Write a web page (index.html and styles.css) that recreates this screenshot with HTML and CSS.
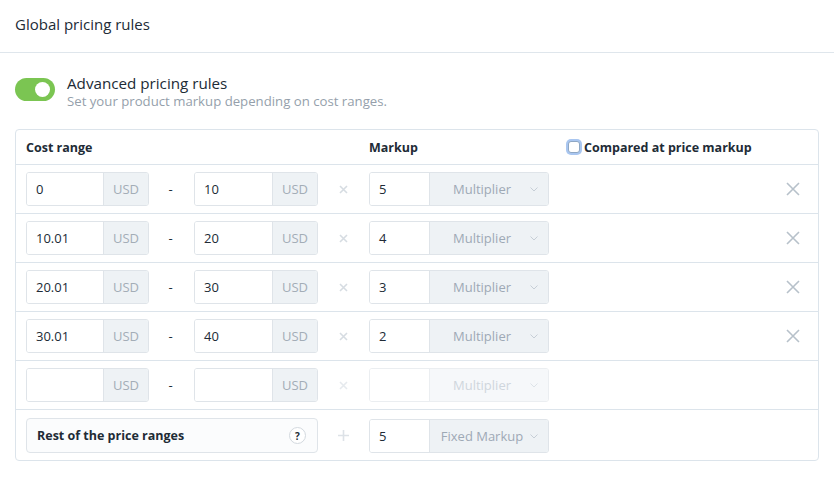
FILE: index.html
```html
<!DOCTYPE html>
<html>
<head>
<meta charset="utf-8">
<link rel="stylesheet" href="styles.css">
</head>
<body>
<div class="page">
  <div class="titlebar">Global pricing rules</div>
  <div class="adv">
    <div class="toggle"><span class="knob"></span></div>
    <div class="adv-text">
      <div class="adv-title">Advanced pricing rules</div>
      <div class="adv-sub">Set your product markup depending on cost ranges.</div>
    </div>
  </div>
  <div class="table">
    <div class="row head">
      <div class="h-cost">Cost range</div>
      <div class="h-markup">Markup</div>
      <div class="h-compared"><span class="checkbox"></span>Compared at price markup</div>
    </div>

    <div class="row">
      <div class="inp"><span class="val">0</span><span class="addon">USD</span></div>
      <div class="dash">-</div>
      <div class="inp"><span class="val">10</span><span class="addon">USD</span></div>
      <div class="op"><svg width="9" height="9" viewBox="0 0 9 9"><path d="M1 1L8 8M8 1L1 8" stroke="#d6dce2" stroke-width="1.6"/></svg></div>
      <div class="mk"><span class="val">5</span><span class="sel">Multiplier<svg class="chev" width="8" height="5" viewBox="0 0 8 5"><path d="M0.5 0.5L4 4L7.5 0.5" fill="none" stroke="#c6ced6" stroke-width="1"/></svg></span></div>
      <div class="sp"></div>
      <div class="rm"><svg width="14" height="14" viewBox="0 0 14 14"><path d="M1 1L13 13M13 1L1 13" stroke="#b7c1ca" stroke-width="1.6"/></svg></div>
    </div>

    <div class="row">
      <div class="inp"><span class="val">10.01</span><span class="addon">USD</span></div>
      <div class="dash">-</div>
      <div class="inp"><span class="val">20</span><span class="addon">USD</span></div>
      <div class="op"><svg width="9" height="9" viewBox="0 0 9 9"><path d="M1 1L8 8M8 1L1 8" stroke="#d6dce2" stroke-width="1.6"/></svg></div>
      <div class="mk"><span class="val">4</span><span class="sel">Multiplier<svg class="chev" width="8" height="5" viewBox="0 0 8 5"><path d="M0.5 0.5L4 4L7.5 0.5" fill="none" stroke="#c6ced6" stroke-width="1"/></svg></span></div>
      <div class="sp"></div>
      <div class="rm"><svg width="14" height="14" viewBox="0 0 14 14"><path d="M1 1L13 13M13 1L1 13" stroke="#b7c1ca" stroke-width="1.6"/></svg></div>
    </div>

    <div class="row">
      <div class="inp"><span class="val">20.01</span><span class="addon">USD</span></div>
      <div class="dash">-</div>
      <div class="inp"><span class="val">30</span><span class="addon">USD</span></div>
      <div class="op"><svg width="9" height="9" viewBox="0 0 9 9"><path d="M1 1L8 8M8 1L1 8" stroke="#d6dce2" stroke-width="1.6"/></svg></div>
      <div class="mk"><span class="val">3</span><span class="sel">Multiplier<svg class="chev" width="8" height="5" viewBox="0 0 8 5"><path d="M0.5 0.5L4 4L7.5 0.5" fill="none" stroke="#c6ced6" stroke-width="1"/></svg></span></div>
      <div class="sp"></div>
      <div class="rm"><svg width="14" height="14" viewBox="0 0 14 14"><path d="M1 1L13 13M13 1L1 13" stroke="#b7c1ca" stroke-width="1.6"/></svg></div>
    </div>

    <div class="row">
      <div class="inp"><span class="val">30.01</span><span class="addon">USD</span></div>
      <div class="dash">-</div>
      <div class="inp"><span class="val">40</span><span class="addon">USD</span></div>
      <div class="op"><svg width="9" height="9" viewBox="0 0 9 9"><path d="M1 1L8 8M8 1L1 8" stroke="#d6dce2" stroke-width="1.6"/></svg></div>
      <div class="mk"><span class="val">2</span><span class="sel">Multiplier<svg class="chev" width="8" height="5" viewBox="0 0 8 5"><path d="M0.5 0.5L4 4L7.5 0.5" fill="none" stroke="#c6ced6" stroke-width="1"/></svg></span></div>
      <div class="sp"></div>
      <div class="rm"><svg width="14" height="14" viewBox="0 0 14 14"><path d="M1 1L13 13M13 1L1 13" stroke="#b7c1ca" stroke-width="1.6"/></svg></div>
    </div>

    <div class="row">
      <div class="inp"><span class="val"></span><span class="addon">USD</span></div>
      <div class="dash">-</div>
      <div class="inp"><span class="val"></span><span class="addon">USD</span></div>
      <div class="op"><svg width="9" height="9" viewBox="0 0 9 9"><path d="M1 1L8 8M8 1L1 8" stroke="#e6eaee" stroke-width="1.6"/></svg></div>
      <div class="mk disabled"><span class="val"></span><span class="sel">Multiplier<svg class="chev" width="8" height="5" viewBox="0 0 8 5"><path d="M0.5 0.5L4 4L7.5 0.5" fill="none" stroke="#dde3e8" stroke-width="1"/></svg></span></div>
      <div class="sp"></div>
      <div class="rm"></div>
    </div>

    <div class="row last">
      <div class="rest"><span>Rest of the price ranges</span><span class="help">?</span></div>
      <div class="op"><svg width="11" height="11" viewBox="0 0 11 11"><path d="M5.5 0V11M0 5.5H11" stroke="#dde2e7" stroke-width="1.6"/></svg></div>
      <div class="mk"><span class="val">5</span><span class="sel">Fixed Markup<svg class="chev" width="8" height="5" viewBox="0 0 8 5"><path d="M0.5 0.5L4 4L7.5 0.5" fill="none" stroke="#c6ced6" stroke-width="1"/></svg></span></div>
      <div class="sp"></div>
      <div class="rm"></div>
    </div>
  </div>
</div>
</body>
</html>
```
FILE: styles.css
```css
* { box-sizing: border-box; }
html, body { margin: 0; padding: 0; background: #fff; }
body {
  font-family: "Open Sans", "Lato", "Liberation Sans", sans-serif;
  color: #212b36;
  font-size: 13px;
}
.page { width: 834px; }
.titlebar {
  height: 53px;
  padding: 14px 15px 0;
  font-size: 15px;
  line-height: 20px;
  border-bottom: 1px solid #dfe6ec;
}
.adv {
  display: flex;
  padding: 25px 15px 0;
  height: 76px;
}
.toggle {
  width: 40px;
  height: 23px;
  border-radius: 12px;
  background: #7bc552;
  position: relative;
  flex: none;
}
.knob {
  position: absolute;
  right: 5px;
  top: 4px;
  width: 15px;
  height: 15px;
  border-radius: 50%;
  background: #fff;
}
.adv-text { margin-left: 12px; margin-top: -4px; }
.adv-title { font-size: 15.2px; line-height: 19px; color: #212b36; }
.adv-sub { font-size: 13.2px; line-height: 16px; color: #959fab; }

.table {
  margin: 0 15px;
  width: 804px;
  border: 1px solid #dce4eb;
  border-radius: 4px;
}
.row {
  display: grid;
  grid-template-columns: 123px 45px 124px 51px 180px 1fr 50px;
  align-items: center;
  padding: 7px 0 7px 10px;
  height: 49px;
  border-bottom: 1px solid #dce4eb;
}
.row.last { border-bottom: none; height: 50px; padding-top: 8px; grid-template-columns: 292px 51px 180px 1fr 50px; }
.row.head {
  height: 35px;
  padding: 0 0 0 10px;
  font-weight: 700;
  font-size: 12.5px;
}
.h-cost { grid-column: 1 / 5; }
.h-markup { grid-column: 5; }
.h-compared { grid-column: 6 / 8; display: flex; align-items: center; padding-left: 19px; }
.checkbox {
  width: 12px; height: 12px;
  border: 1px solid #8ea7c4;
  border-radius: 3px;
  box-shadow: 0 0 0 2px #a9c6f0;
  margin-right: 4px;
  background: #fff;
}
.inp, .mk {
  display: flex;
  height: 34px;
  border: 1px solid #dfe4e9;
  border-radius: 3px;
  overflow: hidden;
}
.val {
  flex: 1;
  padding-left: 9px;
  line-height: 32px;
  font-size: 13px;
  color: #212b36;
  background: #fff;
}
.addon {
  width: 45px;
  background: #eef2f5;
  border-left: 1px solid #dfe4e9;
  color: #a3adb7;
  text-align: center;
  line-height: 32px;
  font-size: 13px;
}
.dash { text-align: center; padding-right: 2px; }
.op, .rm { display: flex; justify-content: center; align-items: center; }
.mk .val { flex: none; width: 59px; }
.sel {
  flex: 1;
  position: relative;
  background: #eef2f5;
  border-left: 1px solid #dfe4e9;
  color: #9ea9b5;
  line-height: 32px;
  text-align: center;
  padding-right: 14px;
  font-size: 13px;
}
.chev { position: absolute; right: 10px; top: 14px; }
.mk.disabled { border-color: #ebeef1; }
.mk.disabled .sel { background: #f6f8fa; border-left-color: #ebeef1; color: #cfd6dd; }
.rest {
  display: flex;
  justify-content: space-between;
  align-items: center;
  height: 35px;
  border: 1px solid #dfe4e9;
  border-radius: 4px;
  background: #fbfcfd;
  padding: 0 11px 0 10px;
  font-weight: 700;
  font-size: 12.5px;
}
.help {
  width: 17px; height: 17px;
  border-radius: 50%;
  border: 1px solid #d3d9df;
  background: #fff;
  font-size: 10px;
  font-weight: 700;
  display: flex;
  align-items: center;
  justify-content: center;
}
```
